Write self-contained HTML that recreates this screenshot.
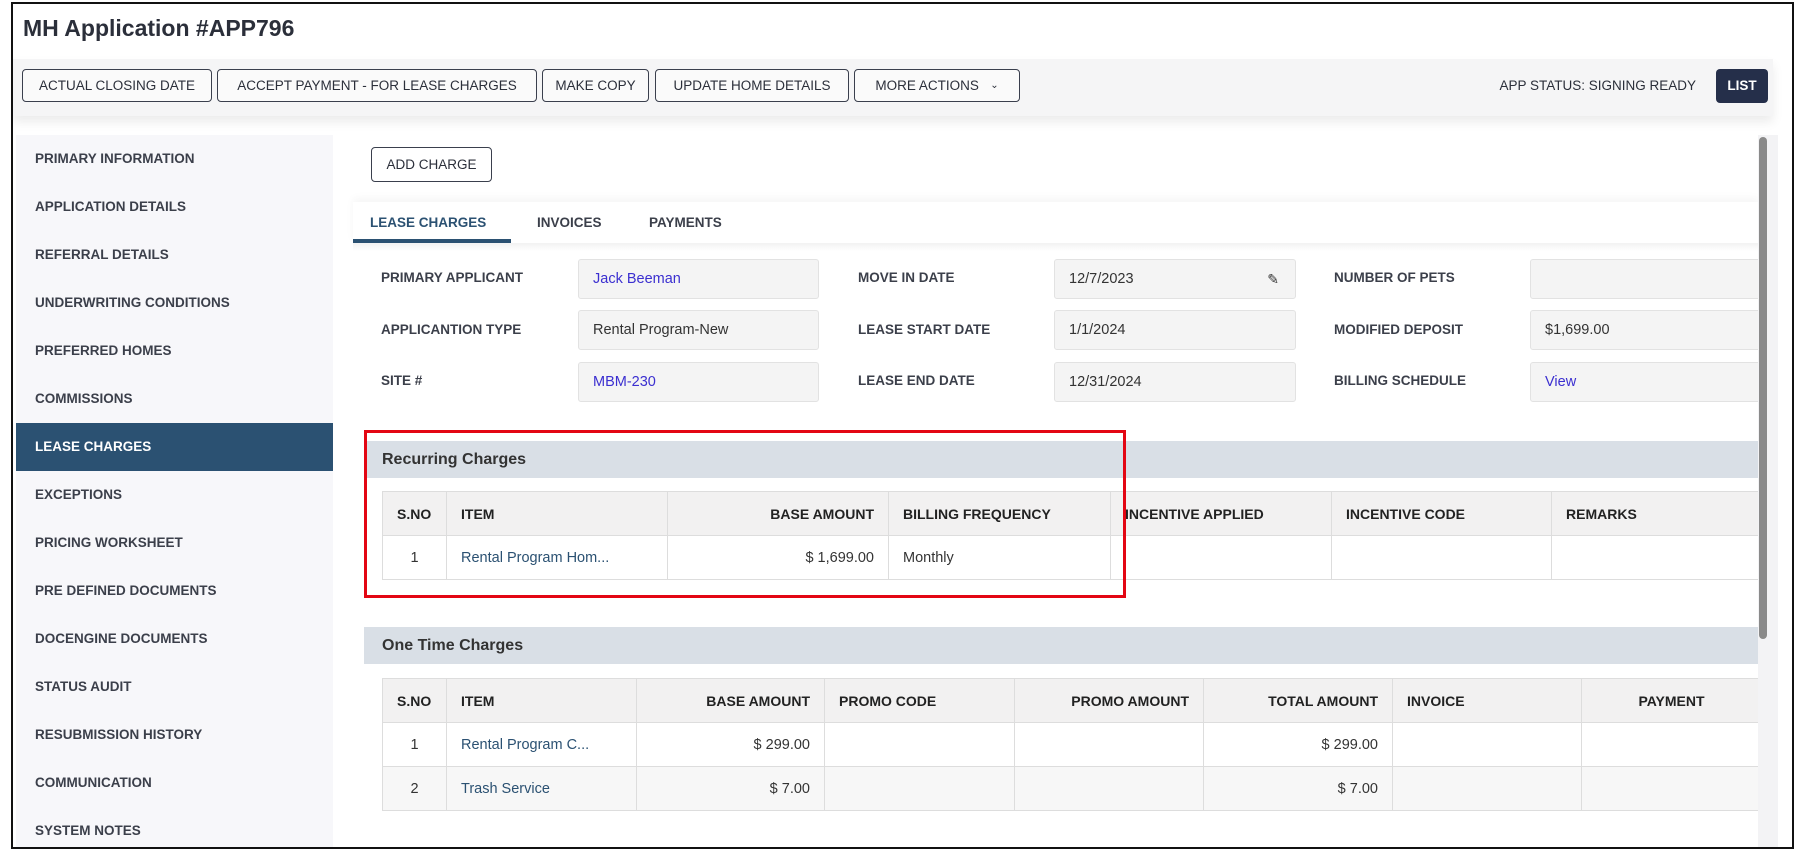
<!DOCTYPE html>
<html><head><meta charset="utf-8"><style>
*{box-sizing:border-box;margin:0;padding:0}
body{width:1802px;height:854px;overflow:hidden;background:#fff;font-family:"Liberation Sans",sans-serif;color:#333;position:relative}
.frame{position:absolute;left:11px;top:2px;width:1783px;height:847px;border:2px solid #111;overflow:hidden;background:#fff}
.abs{position:absolute}
h1{position:absolute;left:10px;top:11px;font-size:23px;font-weight:bold;color:#2b2f3a}
.bar{position:absolute;left:0;top:55px;width:1760px;height:57px;background:#f5f5f6;box-shadow:0 6px 10px rgba(0,0,0,.08)}
.btn{position:absolute;top:10px;height:33px;border:1.5px solid #3a3f4d;border-radius:4px;background:#fafafa;font-size:13.5px;color:#2b2f3a;display:flex;align-items:center;justify-content:center;white-space:nowrap}
.side{position:absolute;left:3px;top:131px;width:317px;height:720px;background:#f7f7fa}
.si{position:absolute;left:0;width:317px;height:48px;line-height:48px;padding-left:19px;font-size:13.5px;font-weight:bold;color:#3b3f4a}
.si.act{background:#2b5172;color:#fff}
.main{position:absolute;left:340px;top:131px;width:1420px;height:720px;background:#fff}
.lbl{position:absolute;font-size:13.5px;color:#3b3f4a;font-weight:bold}
.inp{position:absolute;height:40px;background:#f4f4f4;border:1px solid #e2e2e2;border-radius:3px;font-size:14.5px;line-height:38px;padding-left:14px;color:#333}
.sec{position:absolute;left:11px;width:1395px;height:37px;background:#d9dfe6;font-size:16px;font-weight:bold;color:#333;line-height:37px;padding-left:18px}
table{position:absolute;left:29px;border-collapse:collapse;font-size:14.5px}
td,th{border:1.5px solid #ddd;height:44px;padding:0 14px;white-space:nowrap}
th{background:#f2f1f1;font-weight:bold;font-size:14px;color:#222;text-align:left}
.r{text-align:right}.c{text-align:center}
.lk{color:#2b5172}
tr.ev td{background:#f7f7f7}
</style></head><body>
<div class="frame">
<h1>MH Application #APP796</h1>
<div class="bar">
<div class="btn" style="left:9px;width:190px">ACTUAL CLOSING DATE</div>
<div class="btn" style="left:204px;width:320px">ACCEPT PAYMENT - FOR LEASE CHARGES</div>
<div class="btn" style="left:529px;width:107px">MAKE COPY</div>
<div class="btn" style="left:642px;width:194px">UPDATE HOME DETAILS</div>
<div class="btn" style="left:841px;width:166px">MORE ACTIONS &nbsp;&nbsp;<span style="font-size:10px">&#8964;</span></div>
<div class="abs" style="right:77px;top:19px;font-size:13.5px;color:#2b2f3a">APP STATUS: SIGNING READY</div>
<div class="abs" style="left:1703px;top:10px;width:52px;height:34px;background:#252f4a;border-radius:4px;color:#fff;font-weight:bold;font-size:13.5px;line-height:34px;text-align:center">LIST</div>
</div>
<div class="side">
<div class="si" style="top:0">PRIMARY INFORMATION</div>
<div class="si" style="top:48px">APPLICATION DETAILS</div>
<div class="si" style="top:96px">REFERRAL DETAILS</div>
<div class="si" style="top:144px">UNDERWRITING CONDITIONS</div>
<div class="si" style="top:192px">PREFERRED HOMES</div>
<div class="si" style="top:240px">COMMISSIONS</div>
<div class="si act" style="top:288px">LEASE CHARGES</div>
<div class="si" style="top:336px">EXCEPTIONS</div>
<div class="si" style="top:384px">PRICING WORKSHEET</div>
<div class="si" style="top:432px">PRE DEFINED DOCUMENTS</div>
<div class="si" style="top:480px">DOCENGINE DOCUMENTS</div>
<div class="si" style="top:528px">STATUS AUDIT</div>
<div class="si" style="top:576px">RESUBMISSION HISTORY</div>
<div class="si" style="top:624px">COMMUNICATION</div>
<div class="si" style="top:672px">SYSTEM NOTES</div>
</div>
<div class="main">
<div class="btn" style="left:18px;top:12px;width:121px;height:35px;background:#fff">ADD CHARGE</div>
<div class="abs" style="left:0;top:67px;width:1406px;height:42px;background:#fff;box-shadow:0 -4px 8px rgba(0,0,0,.04)"></div>
<div class="abs" style="left:17px;top:80px;font-size:13.5px;font-weight:bold;color:#2b5172">LEASE CHARGES</div>
<div class="abs" style="left:184px;top:80px;font-size:13.5px;font-weight:bold;color:#3b3f4a">INVOICES</div>
<div class="abs" style="left:296px;top:80px;font-size:13.5px;font-weight:bold;color:#3b3f4a">PAYMENTS</div>
<div class="abs" style="left:0;top:104px;width:158px;height:4px;background:#2b5172"></div>
<div class="abs" style="left:0;top:108px;width:1406px;height:8px;background:linear-gradient(#f2f2f2,#fff)"></div>

<div class="lbl" style="left:28px;top:135px">PRIMARY APPLICANT</div>
<div class="lbl" style="left:28px;top:187px">APPLICANTION TYPE</div>
<div class="lbl" style="left:28px;top:238px">SITE #</div>
<div class="inp" style="left:225px;top:124px;width:241px;color:#3b2fd0">Jack Beeman</div>
<div class="inp" style="left:225px;top:175px;width:241px">Rental Program-New</div>
<div class="inp" style="left:225px;top:227px;width:241px;color:#3b2fd0">MBM-230</div>
<div class="lbl" style="left:505px;top:135px">MOVE IN DATE</div>
<div class="lbl" style="left:505px;top:187px">LEASE START DATE</div>
<div class="lbl" style="left:505px;top:238px">LEASE END DATE</div>
<div class="inp" style="left:701px;top:124px;width:242px">12/7/2023<span style="position:absolute;right:16px;top:0;font-size:14px">&#9998;</span></div>
<div class="inp" style="left:701px;top:175px;width:242px">1/1/2024</div>
<div class="inp" style="left:701px;top:227px;width:242px">12/31/2024</div>
<div class="lbl" style="left:981px;top:135px">NUMBER OF PETS</div>
<div class="lbl" style="left:981px;top:187px">MODIFIED DEPOSIT</div>
<div class="lbl" style="left:981px;top:238px">BILLING SCHEDULE</div>
<div class="inp" style="left:1177px;top:124px;width:240px"></div>
<div class="inp" style="left:1177px;top:175px;width:240px">$1,699.00</div>
<div class="inp" style="left:1177px;top:227px;width:240px;color:#3b2fd0">View</div>

<div class="sec" style="top:306px">Recurring Charges</div>
<table style="top:356px;width:1380px">
<tr><th style="width:64px">S.NO</th><th style="width:221px">ITEM</th><th class="r" style="width:221px">BASE AMOUNT</th><th style="width:222px">BILLING FREQUENCY</th><th style="width:221px">INCENTIVE APPLIED</th><th style="width:220px">INCENTIVE CODE</th><th>REMARKS</th></tr>
<tr><td class="c">1</td><td class="lk">Rental Program Hom...</td><td class="r">$ 1,699.00</td><td>Monthly</td><td></td><td></td><td></td></tr>
</table>
<div class="abs" style="left:11px;top:295px;width:762px;height:168px;border:3.5px solid #e30613"></div>

<div class="sec" style="top:492px">One Time Charges</div>
<table style="top:543px;width:1380px">
<tr><th style="width:64px">S.NO</th><th style="width:190px">ITEM</th><th class="r" style="width:188px">BASE AMOUNT</th><th style="width:190px">PROMO CODE</th><th class="r" style="width:189px">PROMO AMOUNT</th><th class="r" style="width:189px">TOTAL AMOUNT</th><th style="width:189px">INVOICE</th><th class="c">PAYMENT</th></tr>
<tr><td class="c">1</td><td class="lk">Rental Program C...</td><td class="r">$ 299.00</td><td></td><td></td><td class="r">$ 299.00</td><td></td><td></td></tr>
<tr class="ev"><td class="c">2</td><td class="lk">Trash Service</td><td class="r">$ 7.00</td><td></td><td></td><td class="r">$ 7.00</td><td></td><td></td></tr>
</table>
<div class="abs" style="left:1405px;top:0;width:20px;height:720px;background:#f3f3f5"></div>
<div class="abs" style="left:1406px;top:2px;width:8px;height:502px;background:#8a8a8a;border-radius:4px"></div>
</div>
</div>
</body></html>
